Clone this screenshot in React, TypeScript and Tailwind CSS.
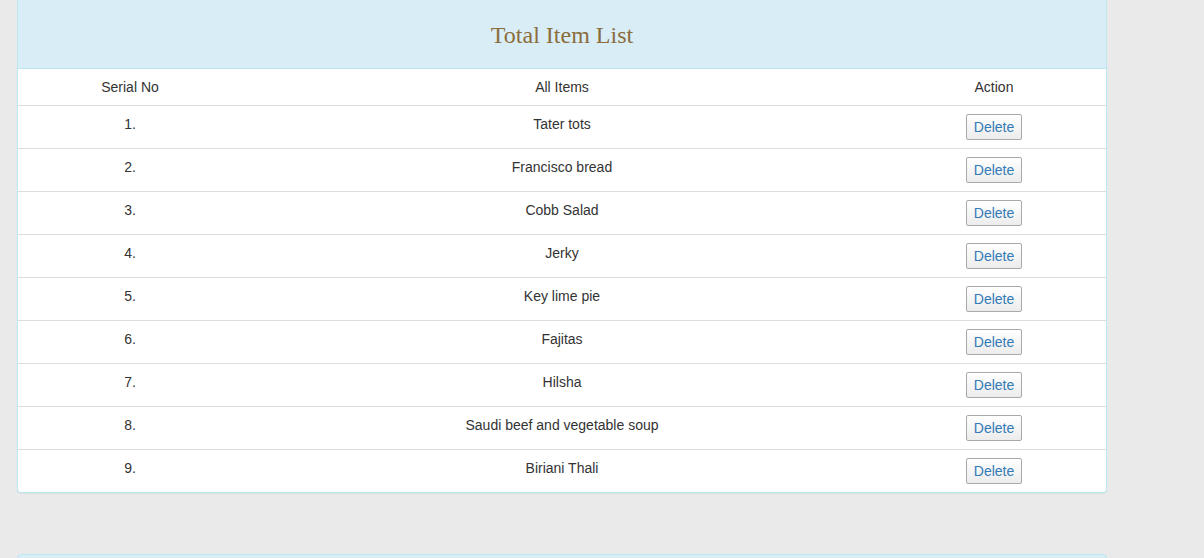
const items = [
  'Tater tots',
  'Francisco bread',
  'Cobb Salad',
  'Jerky',
  'Key lime pie',
  'Fajitas',
  'Hilsha',
  'Saudi beef and vegetable soup',
  'Biriani Thali',
];

export default function App() {
  return (
    <div className="h-[558px] overflow-hidden bg-[#eaeaea] pl-[17px] pr-[97px] font-['Liberation_Sans',Arial,sans-serif] text-[14px] leading-[20px] text-[#333]">
      <div className="rounded-b-[4px] border-x border-b border-[#bce8f1] bg-white shadow-[0_1px_1px_rgba(0,0,0,0.05)]">
        <div className="flex h-[69px] items-center justify-center border-b border-[#bce8f1] bg-[#d9edf7] pt-[2px]">
          <h3 className="font-['Liberation_Serif','Times_New_Roman',serif] text-[24px] leading-none text-[#8b6d3c]">Total Item List</h3>
        </div>
        <table className="w-full table-fixed border-collapse">
          <thead>
            <tr className="border-b border-[#ddd]">
              <th className="w-[224px] px-2 py-2 text-center font-normal">Serial No</th>
              <th className="px-2 py-2 text-center font-normal">All Items</th>
              <th className="w-[224px] px-2 py-2 text-center font-normal">Action</th>
            </tr>
          </thead>
          <tbody>
            {items.map((item, i) => (
              <tr key={item} className={i < items.length - 1 ? 'border-b border-[#ddd]' : ''}>
                <td className="h-[42px] px-2 pt-2 text-center align-top">{i + 1}.</td>
                <td className="px-2 pt-2 text-center align-top">{item}</td>
                <td className="px-2 pt-2 pb-2 text-center align-top">
                  <button className="h-[26px] w-[56px] rounded-[2px] border border-[#a9a9a9] bg-gradient-to-b from-white to-[#ececec] text-[14px] leading-none text-[#337ab7]">
                    Delete
                  </button>
                </td>
              </tr>
            ))}
          </tbody>
        </table>
      </div>
      <div className="mt-[61px] h-[40px] rounded-t-[4px] border border-[#bce8f1] bg-[#d9edf7]" />
    </div>
  );
}
